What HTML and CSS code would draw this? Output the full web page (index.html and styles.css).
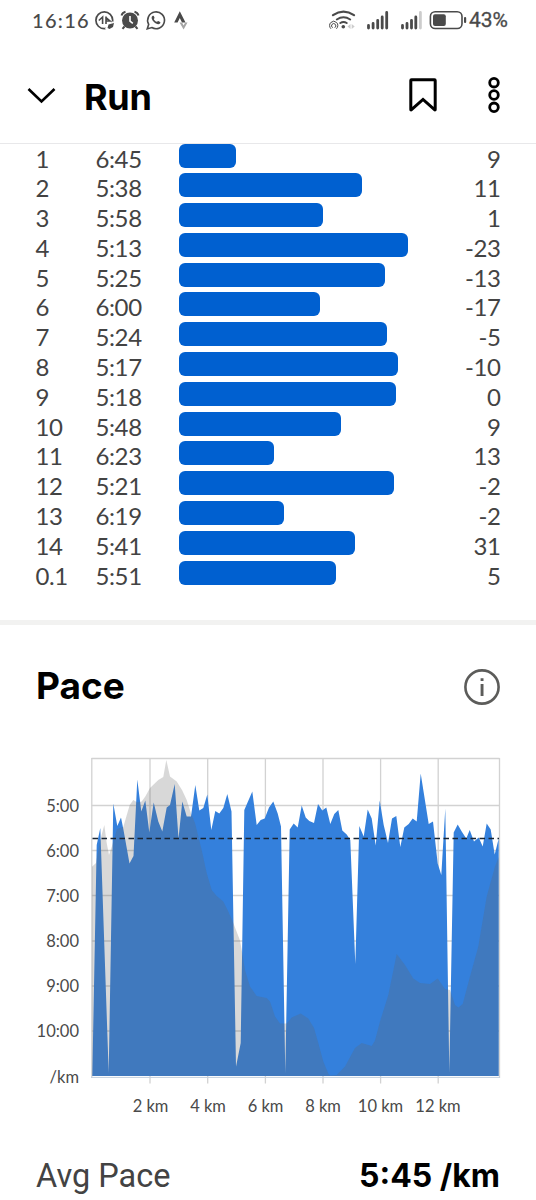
FILE: index.html
```html
<!DOCTYPE html>
<html>
<head>
    <meta charset="UTF-8">
    <meta name="viewport" content="width=device-width, initial-scale=1.0">
    <title>Run</title>
    <link rel="stylesheet" href="styles.css">
</head>
<body>
    <div class="status">
        <span class="clock">16:16</span>
        <svg class="status-left" width="100" height="24" viewBox="94 8 100 24">
            <!-- data transfer -->
            <circle cx="104.3" cy="20.3" r="8.4" fill="none" stroke="#4a4a4a" stroke-width="1.7"/>
            <path d="M98.800 20.500l3.800-3.500v7M106 16.500v7.500M106 17.500l4 3.500h-4" fill="none" stroke="#4a4a4a" stroke-width="1.600"/>
            <path d="M106.5 30l7.5-7" stroke="#fff" stroke-width="4.500"/>
            <path d="M107.5 28l1-3.500 5.500-1.500-1 4-3.500 2z" fill="#4a4a4a"/>
            <!-- alarm -->
            <circle cx="130" cy="20.5" r="8" fill="#4a4a4a"/>
            <path d="M121.500 15.500q1-3 4-3.800M138.500 15.500q-1-3-4-3.800M124.500 26.500l-2 2.300M135.500 26.500l2 2.300" fill="none" stroke="#4a4a4a" stroke-width="2"/>
            <path d="M130 16v5l2.800 2.300" fill="none" stroke="#fff" stroke-width="1.600"/>
            <!-- chat -->
            <path d="M147.200 28.900l1.500-4.600a8.400 8.400 0 1 1 3.100 3.200z" fill="none" stroke="#4a4a4a" stroke-width="1.600"/>
            <path d="M152.500 16c-1.800 1.500-.5 4 1.500 6s4.600 3.200 6.200 1.300c.6-.8.2-1.200-1.600-2.100-.8-.4-1 .9-1.800.6-1.300-.5-2.500-1.600-3-2.900 1.400-.8.5-1.500.1-2.600-.3-.6-1-.6-1.400-.3z" fill="#4a4a4a"/>
            <!-- strava -->
            <path d="M174.200 22.600l5.600-11.300 5.700 11.300h-3.500l-2.200-4.500-2.200 4.500z" fill="#4a4a4a"/>
            <path d="M179.500 22.600h2.500l1.600 3 1.600-3h2.300l-3.900 7z" fill="#a5a5a5"/>
        </svg>
        <svg class="status-right" width="140" height="24" viewBox="328 8 140 24">
            <g fill="none" stroke="#4a4a4a" stroke-linecap="round">
                <path d="M333 15.200q10.500-7 21 0" stroke-width="2.200"/>
                <path d="M336.800 19.500q6.700-4.500 13.400 0" stroke-width="2"/>
                <path d="M340.300 23q3.200-2 6.400 0" stroke-width="2"/>
                <path d="M330.700 28.500a4.200 4.200 0 1 1 6 0" stroke-width="1"/>
                <path d="M332.300 27.500a2.200 2.200 0 1 1 2.800 0" stroke-width="1"/>
            </g>
            <circle cx="343.300" cy="26.800" r="1.800" fill="#4a4a4a"/>
            <path d="M350.500 24v5l-3-2.500zM351.700 24v5l3-2.500z" fill="#ccc"/>
            <g stroke="#4a4a4a" stroke-width="2.800" stroke-linecap="round">
                <path d="M368.500 25.500v2.500M373.100 23.500v4.500M377.700 20.300v7.700M382.200 17v11M386.700 12.500v15.500"/>
                <path d="M402.500 25.500v2.500M407 23.500v4.500M411.500 20.300v7.700M415.800 17v11"/>
                <path d="M420.400 12.500v15.500" stroke="#ccc"/>
            </g>
            <rect x="430.400" y="11.700" width="31.600" height="16.800" rx="4.800" fill="none" stroke="#4a4a4a" stroke-width="1.600"/>
            <rect x="433" y="14.300" width="12.800" height="11.600" rx="2" fill="#4a4a4a"/>
            <rect x="464" y="17" width="2.200" height="6" rx="1" fill="#4a4a4a"/>
        </svg>
        <span class="battery">43%</span>
    </div>

    <div class="header">
        <svg width="30" height="20" viewBox="0 0 30 20">
            <path d="M1.500 4L14.500 16.500 27.500 4" fill="none" stroke="#000" stroke-width="2.600"/>
        </svg>
        <h1>Run</h1>
        <svg class="bookmark" width="28" height="34" viewBox="0 0 28 34">
            <path d="M2.500 1.800h23q.7 0 .7.700v28.900q0 .9-.7.300L14 21.500 2.500 31.700q-.7.600-.7-.3V2.500q0-.7.700-.7z" fill="none" stroke="#000" stroke-width="3"/>
        </svg>
        <svg width="12" height="38" viewBox="0 0 12 38">
            <g fill="none" stroke="#000" stroke-width="2.800">
                <circle cx="6" cy="6.700" r="4.300"/>
                <circle cx="6" cy="19" r="4.300"/>
                <circle cx="6" cy="31.300" r="4.300"/>
            </g>
        </svg>
    </div>

    <div class="splits">
        <div class="split"><span>1</span><span>6:45</span><div class="bar" style="width: 57.3px"></div><span class="elev">9</span></div>
        <div class="split"><span>2</span><span>5:38</span><div class="bar" style="width: 183.3px"></div><span class="elev">11</span></div>
        <div class="split"><span>3</span><span>5:58</span><div class="bar" style="width: 144.3px"></div><span class="elev">1</span></div>
        <div class="split"><span>4</span><span>5:13</span><div class="bar" style="width: 229.3px"></div><span class="elev">-23</span></div>
        <div class="split"><span>5</span><span>5:25</span><div class="bar" style="width: 206.3px"></div><span class="elev">-13</span></div>
        <div class="split"><span>6</span><span>6:00</span><div class="bar" style="width: 141.3px"></div><span class="elev">-17</span></div>
        <div class="split"><span>7</span><span>5:24</span><div class="bar" style="width: 208.3px"></div><span class="elev">-5</span></div>
        <div class="split"><span>8</span><span>5:17</span><div class="bar" style="width: 219.6px"></div><span class="elev">-10</span></div>
        <div class="split"><span>9</span><span>5:18</span><div class="bar" style="width: 217.3px"></div><span class="elev">0</span></div>
        <div class="split"><span>10</span><span>5:48</span><div class="bar" style="width: 162.3px"></div><span class="elev">9</span></div>
        <div class="split"><span>11</span><span>6:23</span><div class="bar" style="width: 95.8px"></div><span class="elev">13</span></div>
        <div class="split"><span>12</span><span>5:21</span><div class="bar" style="width: 215.3px"></div><span class="elev">-2</span></div>
        <div class="split"><span>13</span><span>6:19</span><div class="bar" style="width: 105.3px"></div><span class="elev">-2</span></div>
        <div class="split"><span>14</span><span>5:41</span><div class="bar" style="width: 176.3px"></div><span class="elev">31</span></div>
        <div class="split"><span>0.1</span><span>5:51</span><div class="bar" style="width: 157.8px"></div><span class="elev">5</span></div>
    </div>

    <div class="pace">
        <div class="pace-title">
            <h2>Pace</h2>
            <svg width="36" height="36" viewBox="0 0 36 36">
                <circle cx="18" cy="18" r="16.600" fill="none" stroke="#5c5c5a" stroke-width="2.600"/>
                <path d="M16.600 9.200h2.900v2.900h-2.900zM16.600 15h2.900v12h-2.900z" fill="#5c5c5a"/>
            </svg>
        </div>
        <svg class="chart" width="536" height="380" viewBox="0 750 536 380">
            <path class="grid" d="M91.500 758.500H499.500M91.500 805.500H499.500M91.500 850.500H499.500M91.500 895.500H499.500M91.500 941H499.500M91.500 986H499.500M91.500 1031H499.500"/>
            <path class="grid" d="M91.800 758V1078M150 758V1083.500M207.700 758V1083.500M265.400 758V1083.500M323 758V1083.500M380.600 758V1083.500M438.200 758V1083.500M499.500 758V1078"/>
            <path class="base" d="M91 1077.400H500"/>
            <polygon class="speed" points="92.300,1076 96.700,845 100.300,828 108.700,1073 113.300,803.500 117.300,826 121,817.500 123.500,830 129.500,863.500 133.500,856 137.300,779.500 141.300,811.500 145.300,800.500 149.300,832.500 153.700,802.500 158.300,821.500 162.300,831.500 166.700,807.500 170,805 174.700,784 178.500,838.500 182.300,801.500 186.700,816.500 191,816.500 195.300,785 199.300,810.500 203.300,808 207.300,794.500 211.300,830 215.300,811 219.300,813.500 223.300,808 227.300,794 231.500,811.500 236,1066.700 240.700,1043 244.300,810 252.300,791.500 256.700,825 260.700,820 264.700,818.500 269,807.500 273.300,801.500 277.700,813.500 281,826.500 285.300,1073 289.700,829.500 293.700,823.500 297.700,827.500 301.700,805.500 305.700,817.500 309.300,821 314,823 318,804 322.300,810.500 326.300,807.500 330.300,824 334.300,814 338.300,810 342.300,830.500 346.700,834.500 350.300,840 355.300,964 359.300,826 363.700,836.500 367.700,809.500 371.700,818.500 375.700,845.500 379.700,800.500 383.700,825 388,843 392,818.500 396.300,816 400.300,847 404.300,827.500 408.700,824 412.700,818.500 416.700,821.500 420.700,773.500 428.700,824 433,821.500 437.700,863.500 441.300,875 445.300,808.500 449.300,1073 453.700,832.500 457.700,824.500 461.700,831.500 466.300,838.500 469.700,830 474,841.500 478.700,837.500 482.700,846.500 486.700,823.500 490.700,829.500 494.700,854.500 498.700,838.500 498.700,1076"/>
            <polygon class="hills" points="92,1076 92,866.700 96,863 100.300,840 104.300,825 106.700,843 109,855 111.700,847 117,829 123.300,827 129.700,805 133.300,800 137.300,802.500 141.700,801.500 145.300,796.500 150,788 158.300,780 163.300,777 166.300,760 170,776.500 176.700,781.500 182.300,790.500 186.700,800 191,813.500 195,823 201.700,850 206.700,873 211.700,890 216.700,896 223.300,901.500 228.300,911.500 233.300,923 240,940.500 241.700,950 245,970 250,986.500 256.700,996 266.700,998 270,1001.500 275,1016.500 280,1023.500 286.700,1023.500 291.700,1017.500 300.700,1013.500 308.300,1018.500 314,1028 318.300,1043 323.300,1061.500 328.300,1073.500 330,1075.500 336.700,1075 345,1066.500 355,1048 361.700,1043 371.700,1046 375,1040.500 380,1021.500 388.300,995 396.700,954 405,965 413.300,978.500 420,983 430,984 437.700,978.500 445,989 450,990 455,1005 458.300,1007.500 462.700,1004 470,976.500 478.300,946.500 486.700,896.500 495,866.500 498.700,857 498.700,1076"/>
            <path class="average" d="M92.500 838.500H499"/>
            <g class="labels labels-y">
                <text x="79" y="811.500">5:00</text>
                <text x="79" y="856.500">6:00</text>
                <text x="79" y="901.500">7:00</text>
                <text x="79" y="947">8:00</text>
                <text x="79" y="992">9:00</text>
                <text x="79" y="1037">10:00</text>
                <text x="79" y="1082.500">/km</text>
            </g>
            <g class="labels labels-x">
                <text x="150.500" y="1112.300">2 km</text>
                <text x="208" y="1112.300">4 km</text>
                <text x="265.500" y="1112.300">6 km</text>
                <text x="323" y="1112.300">8 km</text>
                <text x="380.500" y="1112.300">10 km</text>
                <text x="438" y="1112.300">12 km</text>
            </g>
        </svg>
        <div class="average-row">
            <span>Avg Pace</span>
            <strong>5:45 /km</strong>
        </div>
    </div>
</body>
</html>
```
FILE: styles.css
```css
* {
    padding: 0;
    margin: 0;
    box-sizing: border-box;
}
body {
    width: 536px;
    height: 1200px;
    overflow: hidden;
    background: #fff;
    color: #000;
    font-family: Inter, "Liberation Sans", sans-serif;
}
svg {
    display: block;
    flex: none;
}
.status {
    display: flex;
    align-items: center;
    height: 50px;
    padding: 0 28px 10px 32px;
    color: #4a4a4a;
    white-space: nowrap;
}
.clock {
    width: 62px;
    font: 500 20px/24px Lato, sans-serif;
    letter-spacing: 1.300px;
}
.status-right {
    margin-left: auto;
}
.battery {
    width: 40px;
    padding-left: 1px;
    font: 400 21px/24px Roboto, sans-serif;
    -webkit-text-stroke: .3px #4a4a4a;
}
.header {
    display: flex;
    align-items: center;
    height: 93.500px;
    padding: 0 36px 2px 27px;
    border-bottom: 1px solid #e8e8ea;
}
h1 {
    margin: 3px auto 0 27px;
    font-size: 36px;
    line-height: 44px;
    font-weight: 700;
    letter-spacing: -.3px;
}
.bookmark {
    margin-right: 51px;
}
.splits {
    height: 476.500px;
}
.split {
    display: grid;
    grid-template-columns: 60px 83px 240px 1fr;
    align-items: start;
    height: 29.800px;
    padding: 0 35.500px 0 35.500px;
    color: #434343;
    font: 24px/30px Lato, sans-serif;
    letter-spacing: -.4px;
}
.bar {
    height: 24px;
    border-radius: 6px;
    background: #0060d0;
}
.elev {
    text-align: right;
}
.pace {
    border-top: 5px solid #f2f2f1;
}
.pace-title {
    display: flex;
    justify-content: space-between;
    align-items: center;
    height: 125px;
    padding: 0 36px 0 36px;
}
h2 {
    margin-bottom: 3px;
    font-size: 37px;
    line-height: 44px;
    font-weight: 700;
}
.pace-title svg {
    margin-bottom: 1px;
}
.grid {
    fill: none;
    stroke: #d2d2d2;
    stroke-width: 1.300;
}
.base {
    stroke: #c3cfdd;
}
.speed {
    fill: #3480dc;
}
.hills {
    fill: rgba(100, 100, 100, .25);
}
.average {
    stroke: #182433;
    stroke-width: 1.500;
    stroke-dasharray: 5.500 3.500;
}
.labels {
    fill: #4a4a4a;
    font: 16.500px Lato, sans-serif;
}
.labels-y {
    text-anchor: end;
}
.labels-x {
    text-anchor: middle;
}
.average-row {
    display: flex;
    justify-content: space-between;
    align-items: center;
    height: 92px;
    padding: 0 36px;
    color: #434343;
    font: 32.500px/40px Roboto, sans-serif;
}
.average-row strong {
    color: #000;
    font-family: Inter, sans-serif;
    font-size: 32px;
    font-weight: 700;
}
```
